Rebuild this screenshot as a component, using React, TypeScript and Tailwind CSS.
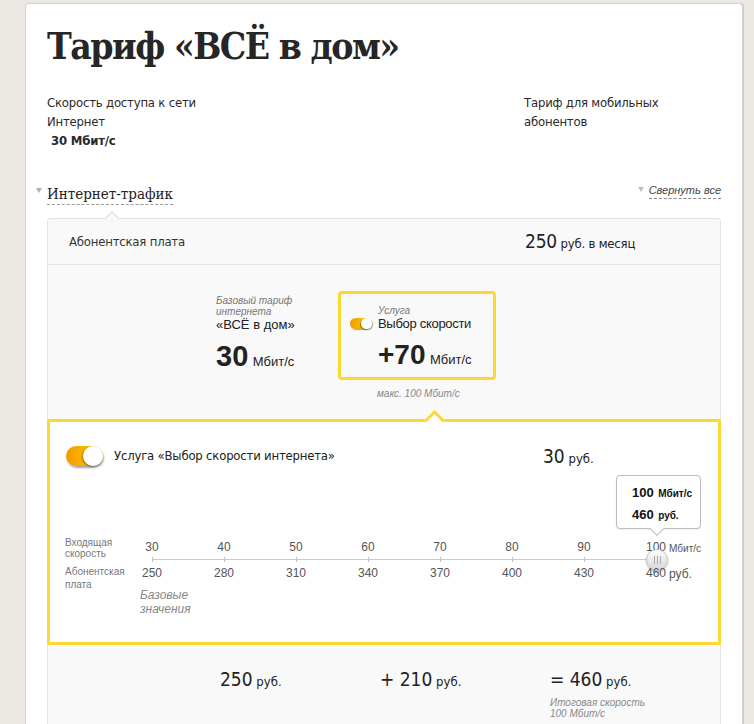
const SANS = "font-['Liberation_Sans',Arial,sans-serif]";
const NARROW = "font-['DejaVu_Sans_Condensed','DejaVu_Sans',sans-serif]";
const SERIF = "font-['DejaVu_Serif_Condensed','DejaVu_Serif',serif]";

const speeds = [30, 40, 50, 60, 70, 80, 90, 100];
const prices = [250, 280, 310, 340, 370, 400, 430, 460];

function Toggle({ big }: { big?: boolean }) {
  if (big) {
    return (
      <div className="relative w-[37px] h-[20px] rounded-full bg-gradient-to-r from-[#f29a00] to-[#ffd200] shadow-[1px_2px_2px_rgba(0,0,0,0.35)] shrink-0">
        <div className="absolute right-0 top-0 w-[20px] h-[20px] rounded-full bg-white shadow-[-1px_1px_2px_rgba(0,0,0,0.35)]" />
      </div>
    );
  }
  return (
    <div className="relative w-[22px] h-[11px] rounded-full bg-gradient-to-r from-[#f29a00] to-[#ffd200] shadow-[1px_1px_1px_rgba(0,0,0,0.35)] shrink-0">
      <div className="absolute right-0 top-0 w-[11px] h-[11px] rounded-full bg-white shadow-[-1px_1px_1px_rgba(0,0,0,0.35)]" />
    </div>
  );
}

export default function App() {
  return (
    <div className={`min-h-screen bg-[#ece9e4] pt-[3px] ${SANS}`}>
      <div className="ml-[25px] w-[718px] bg-white border border-[#d3d3d3] rounded-t-[4px] shadow-[1px_0_1px_rgba(0,0,0,0.15)] px-[21px] pt-[18px] text-[#333]">
        <h1 className={`${SERIF} text-[37px] leading-[48px] font-bold tracking-[-1.5px] text-[#262626]`}>
          Тариф «ВСЁ в дом»
        </h1>

        {/* Summary */}
        <div className={`mt-[23px] flex ${NARROW} text-[13px] leading-[19px] tracking-[-0.2px] text-[#2a2a2a]`}>
          <div className="w-[477px]">
            <div>Скорость доступа к сети</div>
            <div>Интернет</div>
            <div className="font-bold pl-[4px]">30 Мбит/с</div>
          </div>
          <div>
            <div>Тариф для мобильных</div>
            <div>абонентов</div>
          </div>
        </div>

        {/* Section header */}
        <div className="mt-[35px] flex items-start justify-between">
          <div className="relative">
            <span className="absolute -left-[11px] top-[3px] w-0 h-0 border-l-[3px] border-r-[3px] border-t-[5px] border-l-transparent border-r-transparent border-t-[#b0b0b0]" />
            <span className={`${SERIF} block text-[15px] leading-[19px] text-[#222] border-b border-dashed border-[#999]`}>
              Интернет-трафик
            </span>
          </div>
          <div className="relative -mt-[3px]">
            <span className="absolute -left-[11px] top-[5px] w-0 h-0 border-l-[3px] border-r-[3px] border-t-[5px] border-l-transparent border-r-transparent border-t-[#c0c0c0]" />
            <span className="block italic text-[11px] leading-[16px] text-[#444] border-b border-dashed border-[#888]">
              Свернуть все
            </span>
          </div>
        </div>

        {/* Tariff box */}
        <div className="relative mt-[13px] border border-[#e2e2e2] rounded-[3px] bg-[#f9f9f9]">
          <div className="absolute -top-[6px] left-[59px] w-[10px] h-[10px] rotate-45 border-t border-l border-[#e2e2e2] bg-[#f9f9f9]" />

          <div className={`h-[46px] flex items-center pl-[21px] border-b border-[#e4e4e4] ${NARROW} tracking-[-0.2px]`}>
            <div className="w-[456px] text-[13px]">Абонентская плата</div>
            <div className="text-[#222]">
              <span className="text-[19px]">250</span>
              <span className="text-[13px]"> руб. в месяц</span>
            </div>
          </div>

          {/* Base vs service */}
          <div className="h-[154px] flex items-start pt-[26px] pl-[168px]">
            <div className="w-[122px] mt-[4px]">
              <div className="italic text-[10px] leading-[11px] text-[#777]">
                Базовый тариф
                <br />
                интернета
              </div>
              <div className="text-[13px] leading-[15px] text-[#222]">«ВСЁ в дом»</div>
              <div className="mt-[7px] leading-[34px] text-[#222]">
                <span className="text-[29px] font-bold">30</span>{' '}
                <span className="text-[13px]">Мбит/с</span>
              </div>
            </div>
            <div>
              <div className="w-[158px] h-[89px] border-[3px] border-[#fdd835] rounded-[4px] pl-[9px] pt-[11px]">
                <div className="pl-[28px] italic text-[10px] leading-[11px] text-[#777]">Услуга</div>
                <div className="flex items-center gap-[6px] text-[13px] leading-[15px] tracking-[-0.3px] text-[#222]">
                  <Toggle />
                  Выбор скорости
                </div>
                <div className="pl-[28px] mt-[8px] leading-[32px] text-[#222]">
                  <span className="text-[28px] font-bold">+70</span>{' '}
                  <span className="text-[13px]">Мбит/с</span>
                </div>
              </div>
              <div className="mt-[8px] pl-[39px] italic text-[10px] leading-[12px] text-[#888]">
                макс. 100 Мбит/с
              </div>
            </div>
          </div>

          {/* Speed service panel */}
          <div className="relative -mx-px border-[3px] border-[#fdd835] bg-white pl-[15px] pt-[24px] pb-[26px]">
            <div className="absolute -top-[9px] left-[377px] w-[15px] h-[15px] rotate-45 border-t-[3px] border-l-[3px] border-[#fdd835] bg-white" />

            <div className="flex items-center h-[20px]">
              <div className="w-[478px] flex items-center gap-[11px] pl-px">
                <Toggle big />
                <span className={`${NARROW} text-[13px] tracking-[-0.2px] text-[#222]`}>
                  Услуга «Выбор скорости интернета»
                </span>
              </div>
              <div className={`${NARROW} text-[#222]`}>
                <span className="text-[19px]">30</span>
                <span className="text-[13px]"> руб.</span>
              </div>
            </div>

            <div className="absolute left-[566px] top-[53px] w-[85px] h-[54px] rounded-[4px] border border-[#bdbdbd] bg-white pl-[15px] pt-[6px] leading-[20px] font-bold text-[#111] shadow-[0_1px_2px_rgba(0,0,0,0.08)]">
              <div>
                <span className="text-[13px]">100</span> <span className="text-[10px]">Мбит/с</span>
              </div>
              <div>
                <span className="text-[13px]">460</span> <span className="text-[10px]">руб.</span>
              </div>
              <div className="absolute -bottom-[6px] left-[35px] w-[10px] h-[10px] rotate-45 border-r border-b border-[#bdbdbd] bg-white" />
            </div>

            {/* Scale */}
            <div className="mt-[74px] flex h-[14px]">
              <div className="w-[51px] -mt-[3px] text-[10px] leading-[11px] text-[#777] whitespace-nowrap">
                Входящая
                <br />
                скорость
              </div>
              <div className="grid grid-cols-[repeat(8,72px)] text-center text-[12px] leading-[14px] text-[#555]">
                {speeds.map((s, i) => (
                  <div key={s}>
                    <span className="relative">
                      {s}
                      {i === speeds.length - 1 && (
                        <span className="absolute left-full ml-[3px] top-[2px] text-[10px] whitespace-nowrap">Мбит/с</span>
                      )}
                    </span>
                  </div>
                ))}
              </div>
            </div>

            <div className="ml-[51px] relative grid grid-cols-[repeat(8,72px)] h-[12px]">
              <div className="absolute left-[36px] top-[5px] w-[505px] h-px bg-[#c9c9c9]" />
              {speeds.slice(0, 7).map((s) => (
                <div key={s} className="mx-auto mt-[3px] w-px h-[5px] bg-[#bcbcbc]" />
              ))}
              <div className="absolute left-[530px] -top-[5px] w-[22px] h-[22px] rounded-full border border-[#c4c4c4] bg-gradient-to-b from-white to-[#d6d6d6] shadow-[0_1px_2px_rgba(0,0,0,0.25)] flex items-center justify-center gap-[2px]">
                <span className="w-px h-[8px] bg-[#aaa]" />
                <span className="w-px h-[8px] bg-[#aaa]" />
                <span className="w-px h-[8px] bg-[#aaa]" />
              </div>
            </div>

            <div className="flex h-[14px]">
              <div className="w-[51px] -mt-px text-[10px] leading-[13px] text-[#777] whitespace-nowrap">
                Абонентская
                <br />
                плата
              </div>
              <div className="grid grid-cols-[repeat(8,72px)] text-center text-[12px] leading-[14px] text-[#555]">
                {prices.map((p, i) => (
                  <div key={p}>
                    <span className="relative">
                      {p}
                      {i === prices.length - 1 && (
                        <span className="absolute left-full ml-[3px] top-[1px] whitespace-nowrap">руб.</span>
                      )}
                    </span>
                  </div>
                ))}
              </div>
            </div>

            <div className="ml-[75px] mt-[8px] italic text-[12px] leading-[14px] text-[#888]">
              Базовые
              <br />
              значения
            </div>
          </div>

          {/* Total */}
          <div className={`flex pl-[172px] pt-[23px] pb-[30px] ${NARROW} text-[#222]`}>
            <div className="w-[160px] leading-[22px]">
              <span className="text-[19px]">250</span>
              <span className="text-[13px]"> руб.</span>
            </div>
            <div className="w-[170px] leading-[22px]">
              <span className="text-[19px]">+ 210</span>
              <span className="text-[13px]"> руб.</span>
            </div>
            <div>
              <div className="leading-[22px]">
                <span className="text-[19px]">= 460</span>
                <span className="text-[13px]"> руб.</span>
              </div>
              <div className={`${SANS} mt-[4px] italic text-[10px] leading-[11px] text-[#888]`}>
                Итоговая скорость
                <br />
                100 Мбит/с
              </div>
            </div>
          </div>
        </div>
      </div>
    </div>
  );
}
